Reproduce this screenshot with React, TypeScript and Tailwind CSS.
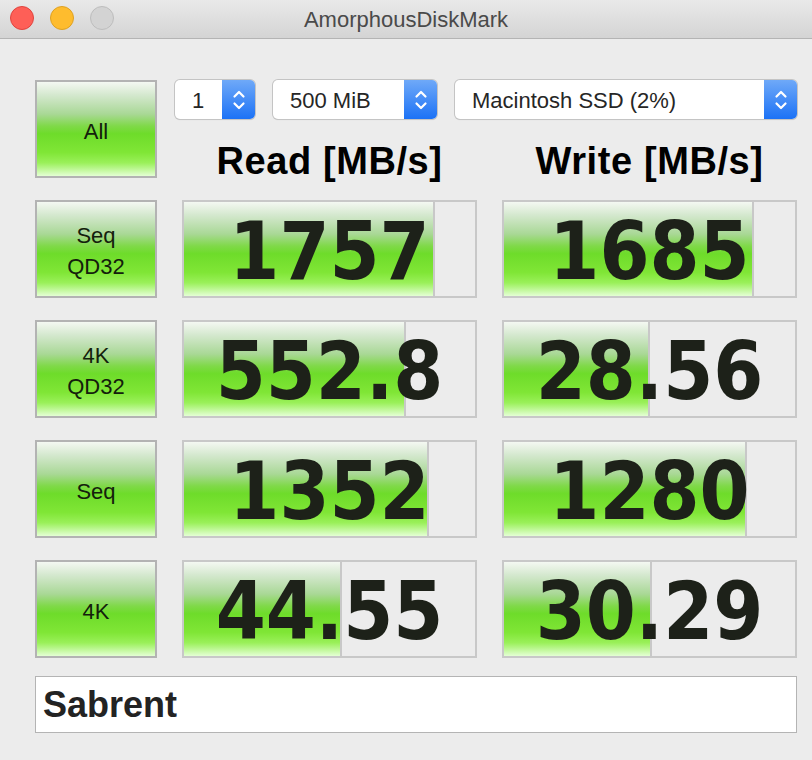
import React from 'react';

const green =
  'bg-[linear-gradient(to_bottom,#f4f8f2_0%,#d4e8ce_14%,#a9d896_34%,#7fd948_47%,#6edc2a_55%,#80e636_75%,#9af05a_86%,#e4ffd4_100%)]';

type Row = { label: string[]; read: string; readFill: number; write: string; writeFill: number };

const rows: Row[] = [
  { label: ['Seq', 'QD32'], read: '1757', readFill: 251, write: '1685', writeFill: 250 },
  { label: ['4K', 'QD32'], read: '552.8', readFill: 222, write: '28.56', writeFill: 146 },
  { label: ['Seq'], read: '1352', readFill: 245, write: '1280', writeFill: 243 },
  { label: ['4K'], read: '44.55', readFill: 158, write: '30.29', writeFill: 148 },
];

const numFont = "font-['DejaVu_Sans_Condensed','DejaVu_Sans',sans-serif]";

function TestButton({ label }: { label: string[] }) {
  return (
    <div
      className={`w-[122px] h-[98px] shrink-0 border-2 border-[#b3b3b3] ${green} flex flex-col items-center justify-center pt-[4px] text-[22px] leading-[31px] text-[#14200c]`}
    >
      {label.map((l) => (
        <span key={l}>{l}</span>
      ))}
    </div>
  );
}

function Bar({ value, fill }: { value: string; fill: number }) {
  return (
    <div className="relative w-[295px] h-[98px] border-2 border-[#c8c8c8] bg-[#ececec]">
      {/* filled portion of the bar */}
      <div
        className={`absolute left-0 top-0 bottom-0 border-r-2 border-[#c8c8c8] ${green}`}
        style={{ width: fill }}
      />
      <div
        className={`relative h-full flex items-center justify-center pt-[5px] ${numFont} font-bold text-[80px] text-[#1d2119]`}
      >
        {value}
      </div>
    </div>
  );
}

function Stepper() {
  return (
    <div className="w-[33px] h-full rounded-r-[5px] bg-[linear-gradient(to_bottom,#6fa9f8,#1c72f6)] flex items-center justify-center">
      <svg width="14" height="24" viewBox="0 0 14 24" fill="none" stroke="white" strokeWidth="2.2" strokeLinecap="round" strokeLinejoin="round">
        <path d="M2.5 8.5 L7 4 L11.5 8.5" />
        <path d="M2.5 15.5 L7 20 L11.5 15.5" />
      </svg>
    </div>
  );
}

function Select({ text, width }: { text: string; width: string }) {
  return (
    <div
      className={`${width} h-[39px] flex rounded-[5px] bg-white shadow-[0_0_0_1px_#c4c4c4,0_1px_1px_rgba(0,0,0,0.15)]`}
    >
      <div className="flex-1 flex items-center pl-[17px] pt-[1px] text-[22px] text-[#262626]">{text}</div>
      <Stepper />
    </div>
  );
}

export default function App() {
  return (
    <div className="w-[812px] h-[760px] bg-[#ececec] font-['Liberation_Sans',Arial,sans-serif] overflow-hidden">
      {/* title bar */}
      <div className="relative h-[39px] bg-[linear-gradient(to_bottom,#e9e9e9,#d4d4d4)] border-b border-[#b4b4b4] flex items-center justify-center">
        <div className="absolute left-[10px] top-[6px] flex gap-[16px]">
          <div className="w-[24px] h-[24px] rounded-full bg-[#fe5f57] border border-[#e0443e]" />
          <div className="w-[24px] h-[24px] rounded-full bg-[#febc2e] border border-[#dea123]" />
          <div className="w-[24px] h-[24px] rounded-full bg-[#d3d3d3] border border-[#bdbdbd]" />
        </div>
        <span className="text-[22px] text-[#4a4a4a]">AmorphousDiskMark</span>
      </div>

      <div className="pl-[35px] pt-[41px] flex flex-col gap-[22px]">
        {/* top row */}
        <div className="flex h-[98px]">
          <TestButton label={['All']} />
          <div className="ml-[18px] flex flex-col">
            <div className="flex gap-[18px]">
              <Select text="1" width="w-[80px]" />
              <Select text="500 MiB" width="w-[164px]" />
              <Select text="Macintosh SSD (2%)" width="w-[342px]" />
            </div>
            <div className="pl-[7px] flex gap-[25px] mt-[23px] text-[38px] tracking-[0.6px] font-bold text-black leading-[38px]">
              <div className="w-[295px] text-center whitespace-nowrap">Read [MB/s]</div>
              <div className="w-[295px] text-center whitespace-nowrap">Write [MB/s]</div>
            </div>
          </div>
        </div>

        {rows.map((r) => (
          <div key={r.label.join(' ')} className="flex gap-[25px]">
            <TestButton label={r.label} />
            <Bar value={r.read} fill={r.readFill} />
            <Bar value={r.write} fill={r.writeFill} />
          </div>
        ))}
      </div>

      <div className="ml-[35px] mt-[18px] w-[762px] h-[57px] bg-white border border-[#b4b4b4] flex items-center pl-[7px] text-[36px] font-bold text-[#232323]">
        Sabrent
      </div>
    </div>
  );
}
